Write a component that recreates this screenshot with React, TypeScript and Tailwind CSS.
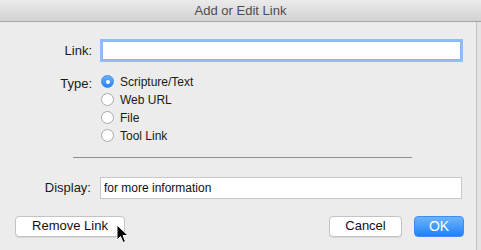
import React from 'react';

const font = { fontFamily: '"Liberation Sans", Arial, sans-serif' };

const Radio = ({ checked, label }: { checked?: boolean; label: string }) => (
  <div className="flex items-center h-[18px]">
    {checked ? (
      <span className="w-[13px] h-[13px] rounded-full bg-gradient-to-b from-[#68b1fa] to-[#1f7ff6] border border-[#3c8ef0] flex items-center justify-center">
        <span className="w-[4px] h-[4px] rounded-full bg-white" />
      </span>
    ) : (
      <span className="w-[13px] h-[13px] rounded-full bg-white border border-[#a9a9a9]" />
    )}
    <span className="ml-[6px] text-[12px] text-[#1a1a1a]">{label}</span>
  </div>
);

const Btn = ({ children, className = '' }: { children: React.ReactNode; className?: string }) => (
  <button className={`h-[21px] rounded-[4px] bg-white border border-[#c3c3c3] shadow-[0_1px_0_rgba(0,0,0,0.08)] text-[13px] text-[#111] flex items-center justify-center ${className}`}>
    {children}
  </button>
);

export default function App() {
  return (
    <div className="w-[481px] h-[250px] bg-[#e3e3e3] overflow-hidden relative" style={font}>
      <div className="h-[22px] bg-gradient-to-b from-[#ebebeb] to-[#d2d2d2] border-b border-[#a6a6a6] flex items-center justify-center">
        <span className="text-[13px] text-[#4d4d4d]">Add or Edit Link</span>
      </div>
      <div className="w-[477px] h-[228px] bg-[#ececec] border-r border-[#c4c4c4] pt-[19px]">
        <div className="flex items-center">
          <div className="w-[92px] text-right text-[13px] text-[#1a1a1a]">Link:</div>
          <div className="ml-[10px] w-[359px] h-[19px] bg-white border border-[#8ab8f2] ring-2 ring-[#8fbdf5]" />
        </div>
        <div className="flex mt-[12px]">
          <div className="w-[92px] text-right text-[13px] text-[#1a1a1a] pt-[1px]">Type:</div>
          <div className="ml-[9px] flex flex-col">
            <Radio checked label="Scripture/Text" />
            <Radio label="Web URL" />
            <Radio label="File" />
            <Radio label="Tool Link" />
          </div>
        </div>
        <div className="ml-[73px] w-[339px] h-px bg-[#8f8f8f] mt-[12px]" />
        <div className="flex items-center mt-[19px]">
          <div className="w-[91px] text-right text-[13px] text-[#1a1a1a]">Display:</div>
          <div className="ml-[9px] w-[362px] h-[22px] bg-white border border-[#c7c7c7] flex items-center px-[3px] text-[12px] text-[#111]">
            for more information
          </div>
        </div>
        <div className="flex items-center mt-[17px] pl-[15px]">
          <Btn className="w-[110px]">Remove Link</Btn>
          <Btn className="w-[73px] ml-[204px]">Cancel</Btn>
          <button className="ml-[12px] w-[50px] h-[21px] rounded-[4px] bg-gradient-to-b from-[#6cb4fb] to-[#1a80f9] border border-[#3d8ef3] text-white text-[14px] flex items-center justify-center">
            OK
          </button>
        </div>
      </div>
      <svg className="absolute left-[116px] top-[224px]" width="14" height="20" viewBox="0 0 14 20">
        <path d="M1 1 L1 16 L4.5 12.5 L7 18.5 L9.5 17.5 L7 11.5 L12 11.5 Z" fill="#000" stroke="#fff" strokeWidth="1" strokeLinejoin="round" />
      </svg>
    </div>
  );
}
